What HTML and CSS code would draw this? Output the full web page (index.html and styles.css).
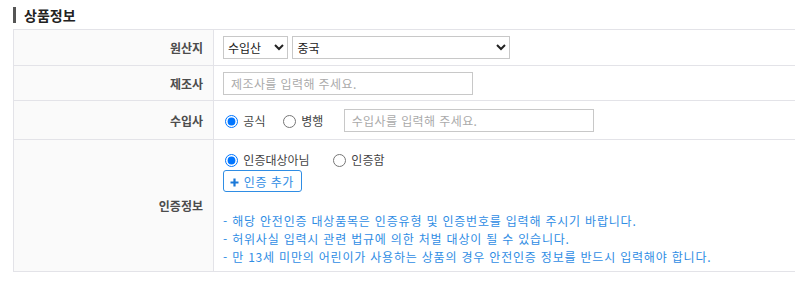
FILE: index.html
```html
<!DOCTYPE html>
<html lang="ko">
<head>
    <meta charset="UTF-8">
    <title>상품정보</title>
    <link rel="stylesheet" href="styles.css">
</head>
<body>
    <div class="section">
        <h3 class="section-title">상품정보</h3>
        <table class="info-table">
            <tr class="row-origin">
                <th>원산지</th>
                <td>
                    <select class="sel-type">
                        <option>수입산</option>
                    </select>
                    <select class="sel-country">
                        <option>중국</option>
                    </select>
                </td>
            </tr>
            <tr class="row-maker">
                <th>제조사</th>
                <td><input type="text" class="txt" placeholder="제조사를 입력해 주세요."></td>
            </tr>
            <tr class="row-importer">
                <th>수입사</th>
                <td>
                    <label class="radio"><input type="radio" name="imp" checked> 공식</label>
                    <label class="radio"><input type="radio" name="imp"> 병행</label>
                    <input type="text" class="txt" placeholder="수입사를 입력해 주세요.">
                </td>
            </tr>
            <tr class="row-cert">
                <th>인증정보</th>
                <td>
                    <div class="radio-line">
                        <label class="radio"><input type="radio" name="cert" checked> 인증대상아님</label>
                        <label class="radio"><input type="radio" name="cert"> 인증함</label>
                    </div>
                    <button class="btn-add">
                        <svg class="plus" width="9" height="9" viewBox="0 0 9 9"><path d="M4.5 0.5v8M0.5 4.5h8" stroke="#1a78d8" stroke-width="2.2"/></svg>
                        인증 추가
                    </button>
                    <ul class="notes">
                        <li>- 해당 안전인증 대상품목은 인증유형 및 인증번호를 입력해 주시기 바랍니다.</li>
                        <li>- 허위사실 입력시 관련 법규에 의한 처벌 대상이 될 수 있습니다.</li>
                        <li>- 만 13세 미만의 어린이가 사용하는 상품의 경우 안전인증 정보를 반드시 입력해야 합니다.</li>
                    </ul>
                </td>
            </tr>
        </table>
    </div>
</body>
</html>
```

FILE: styles.css
```css
body {
    margin: 0;
    font-family: "Noto Sans CJK KR", "Noto Sans", sans-serif;
    font-size: 12px;
    color: #333;
    background: #fff;
    overflow: hidden;
}
.section {
    padding: 7px 0 0 13px;
}
.section-title {
    margin: 0 0 6px;
    padding-left: 8px;
    border-left: 3px solid #555;
    font-size: 14px;
    line-height: 16px;
    font-weight: bold;
    color: #222;
}
.info-table {
    width: 800px;
    border-collapse: collapse;
    border: 1px solid #e3e3e8;
}
.info-table th,
.info-table td {
    border-top: 1px solid #e3e3e8;
    border-bottom: 1px solid #e3e3e8;
}
.info-table th {
    width: 189px;
    padding: 0 10px 0 0;
    background: #fafafa;
    border-right: 1px solid #e3e3e8;
    text-align: right;
    font-weight: bold;
    color: #4c4c4c;
}
.info-table td {
    padding: 0 0 0 9px;
}
.row-origin {
    height: 36px;
}
.row-maker {
    height: 35px;
}
.row-importer {
    height: 39px;
}
.row-cert td {
    padding-top: 9px;
    padding-bottom: 5px;
}
select {
    height: 23px;
    border: 1px solid #c8c8c8;
    background: #fff;
    font-family: inherit;
    font-size: 12px;
    color: #222;
    vertical-align: middle;
    margin: 0;
}
.sel-type {
    width: 65px;
}
.sel-country {
    width: 218px;
    margin-left: 1px;
}
.txt {
    width: 250px;
    height: 23px;
    box-sizing: border-box;
    border: 1px solid #c8c8c8;
    padding: 0 7px;
    font-family: inherit;
    font-size: 12px;
    letter-spacing: 0.4px;
    vertical-align: middle;
}
.txt::placeholder {
    color: #aaa;
}
.radio {
    display: inline-block;
    margin-right: 12px;
    color: #444;
    vertical-align: middle;
}
.radio input {
    margin: 0 2px 0 2px;
    vertical-align: -2px;
}
.row-importer .radio + .radio {
    margin-right: 17px;
}
.radio-line {
    height: 18px;
}
.radio-line .radio {
    margin-right: 18px;
}
.btn-add {
    margin-top: 3px;
    height: 22px;
    padding: 0 7px 0 6px;
    border: 1px solid #2f8de4;
    border-radius: 3px;
    background: #fff;
    color: #2f8de4;
    font-family: inherit;
    font-size: 12px;
    letter-spacing: 0.5px;
}
.plus {
    vertical-align: -0.5px;
    margin-right: 1px;
}
.notes {
    list-style: none;
    margin: 20px 0 0;
    padding: 0;
    color: #2f8de4;
    line-height: 18px;
    letter-spacing: 0.8px;
}
```
